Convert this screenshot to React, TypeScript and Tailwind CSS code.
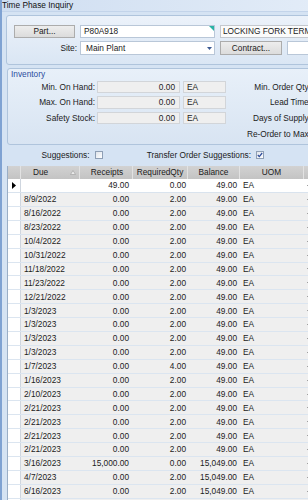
import React from "react";

type Row = [string, string, string, string];

const data: Row[] = [
  ["8/9/2022", "0.00", "2.00", "49.00"],
  ["8/16/2022", "0.00", "2.00", "49.00"],
  ["8/23/2022", "0.00", "2.00", "49.00"],
  ["10/4/2022", "0.00", "2.00", "49.00"],
  ["10/31/2022", "0.00", "2.00", "49.00"],
  ["11/18/2022", "0.00", "2.00", "49.00"],
  ["11/23/2022", "0.00", "2.00", "49.00"],
  ["12/21/2022", "0.00", "2.00", "49.00"],
  ["1/3/2023", "0.00", "2.00", "49.00"],
  ["1/3/2023", "0.00", "2.00", "49.00"],
  ["1/3/2023", "0.00", "2.00", "49.00"],
  ["1/3/2023", "0.00", "2.00", "49.00"],
  ["1/7/2023", "0.00", "4.00", "49.00"],
  ["1/16/2023", "0.00", "2.00", "49.00"],
  ["2/10/2023", "0.00", "2.00", "49.00"],
  ["2/21/2023", "0.00", "2.00", "49.00"],
  ["2/21/2023", "0.00", "2.00", "49.00"],
  ["2/21/2023", "0.00", "2.00", "49.00"],
  ["2/21/2023", "0.00", "2.00", "49.00"],
  ["3/16/2023", "15,000.00", "0.00", "15,049.00"],
  ["4/7/2023", "0.00", "2.00", "15,049.00"],
  ["6/16/2023", "0.00", "2.00", "15,049.00"],
];

const cols = "grid grid-cols-[13px_59px_53px_55px_52px_64px_40px]";

function Checkbox({ checked }: { checked?: boolean }) {
  return (
    <div className="w-[8px] h-[8px] border border-[#8e9fb5] bg-gradient-to-br from-[#dfe4ea] to-[#ffffff] flex items-center justify-center">
      {checked && (
        <svg width="6" height="6" viewBox="0 0 6 6">
          <path d="M0.8 3 L2.3 4.6 L5.2 1" fill="none" stroke="#2a4a9a" strokeWidth="1.2" />
        </svg>
      )}
    </div>
  );
}

function InvRow({ label, right, showInputs }: { label: string; right: string; showInputs: boolean }) {
  return (
    <div className="flex items-center h-[15.7px]">
      <div className="w-[87px] text-right">{label}</div>
      {showInputs ? (
        <>
          <div className="ml-[2px] w-[83px] h-[12.5px] bg-[#efefef] border border-[#d2d5d9] flex items-center justify-end pr-[4px]">0.00</div>
          <div className="ml-[3px] w-[43px] h-[12.5px] bg-[#efefef] border border-[#d2d5d9] flex items-center pl-[3px]">EA</div>
        </>
      ) : (
        <div className="ml-[5px] w-[126px]" />
      )}
      <div className="w-[85px] text-right whitespace-nowrap">{right}</div>
    </div>
  );
}

export default function App() {
  return (
    <div className="w-[308px] h-[500px] overflow-hidden bg-[#d5e3f3] border-l-2 border-[#7fa2d2] text-[8.3px] leading-none text-[#1b1b1b] font-['Liberation_Sans',Arial,sans-serif]">
      <div className="w-[340px] flex flex-col">
        {/* title bar */}
        <div className="h-[12px] flex items-center bg-gradient-to-r from-[#cfdef1] to-[#e4edf8] border-b border-[#c3d4ea]">
          <span className="text-[#111]">Time Phase Inquiry</span>
        </div>

        {/* top panel */}
        <div className="mt-[3px] ml-[4px] h-[50px] rounded-[3px] border border-[#afc4dc] bg-gradient-to-b from-[#ecf2fa] to-[#dae6f4] pt-[9px] pl-[7px]">
          <div className="grid grid-cols-[61px_135px_62px_80px] gap-x-[5px] gap-y-[3px]">
            <div className="h-[13px] bg-gradient-to-b from-[#ededed] to-[#dcdcdc] border border-[#acacac] flex items-center justify-center">Part...</div>
            <div className="relative h-[13px] bg-white border border-[#b9c7d8] flex items-center pl-[3px]">
              P80A918
              <div className="absolute top-0 right-0 w-0 h-0 border-l-[5px] border-l-transparent border-t-[5px] border-t-[#2bb3a5]" />
            </div>
            <div className="col-span-2 h-[13px] bg-[#fbfbfb] border border-[#c4c8ce] flex items-center pl-[2px] whitespace-nowrap overflow-hidden">LOCKING FORK TERMINAL</div>

            <div className="h-[14px] flex items-center justify-end -mr-[2px]">Site:</div>
            <div className="relative h-[14px] bg-white border border-[#b9c7d8] flex items-center pl-[5px]">
              Main Plant
              <svg className="absolute right-[2px] top-[5px]" width="5" height="3" viewBox="0 0 5 3">
                <path d="M0 0 H5 L2.5 3 Z" fill="#3c5a92" />
              </svg>
            </div>
            <div className="h-[14px] bg-gradient-to-b from-[#ededed] to-[#dcdcdc] border border-[#acacac] flex items-center justify-center">Contract...</div>
            <div className="h-[14px] bg-white border border-[#b9c7d8]" />
          </div>
        </div>

        {/* inventory group */}
        <div className="mt-[3px] ml-[5px] h-[77px] rounded-[3px] border border-[#afc4dc] bg-gradient-to-b from-[#e8f0f9] to-[#d8e4f2]">
          <div className="h-[10px] flex items-center pl-[3px] pt-[1px] text-[#2a4d9e]">Inventory</div>
          <InvRow label="Min. On Hand:" right="Min. Order Qty:" showInputs />
          <InvRow label="Max. On Hand:" right="Lead Time:" showInputs />
          <InvRow label="Safety Stock:" right="Days of Supply:" showInputs />
          <InvRow label="" right="Re-Order to Max:" showInputs={false} />
        </div>

        {/* suggestions */}
        <div className="h-[20.5px] flex items-center">
          <div className="w-[87.5px] text-right">Suggestions:</div>
          <div className="ml-[5.5px]">
            <Checkbox />
          </div>
          <div className="w-[148px] text-right">Transfer Order Suggestions:</div>
          <div className="ml-[5px]">
            <Checkbox checked />
          </div>
        </div>

        {/* grid */}
        <div className="ml-[5px] border-l border-[#9aaec6] bg-white">
          <div className={`${cols} h-[13.3px] bg-gradient-to-b from-[#d2d2d2] to-[#c3c3c3] text-[#202020]`}>
            <div className="border-r border-[#e2e2e2]" />
            <div className="relative flex items-center pl-[12px] border-r border-[#e2e2e2]">
              Due
              <svg className="absolute right-[3px] top-[4px]" width="6" height="5" viewBox="0 0 6 5">
                <path d="M3 0.5 L5.5 4.5 H0.5 Z" fill="#ececec" stroke="#a5a5a5" strokeWidth="0.7" />
              </svg>
            </div>
            <div className="flex items-center justify-center border-r border-[#e2e2e2] pl-[2px]">Receipts</div>
            <div className="flex items-center justify-center border-r border-[#e2e2e2]">RequiredQty</div>
            <div className="flex items-center justify-center border-r border-[#e2e2e2]">Balance</div>
            <div className="flex items-center justify-center border-r border-[#e2e2e2]">UOM</div>
            <div />
          </div>

          <div className={`${cols} h-[14.3px] bg-white border-b border-[#d9e3ee]`}>
            <div className="flex items-center justify-center border-r border-[#cfd6df]">
              <svg width="4" height="7" viewBox="0 0 4 7">
                <path d="M0 0 L4 3.5 L0 7 Z" fill="#000" />
              </svg>
            </div>
            <div />
            <div className="flex items-center justify-end pr-[4px]">49.00</div>
            <div className="flex items-center justify-end pr-[2px]">0.00</div>
            <div className="flex items-center justify-end pr-[3px]">49.00</div>
            <div className="flex items-center pl-[3px]">EA</div>
            <div className="flex items-center pl-[3px]">
              <div className="w-[2px] h-[1px] bg-[#a0a0a0]" />
            </div>
          </div>

          {data.map((r, i) => (
            <div key={i} className={`${cols} h-[13.9px] bg-[#efefef] border-b border-[#dbe5f0]`}>
              <div className="bg-white border-r border-[#cfd6df]" />
              <div className="flex items-center pl-[3px]">{r[0]}</div>
              <div className="flex items-center justify-end pr-[4px]">{r[1]}</div>
              <div className="flex items-center justify-end pr-[2px]">{r[2]}</div>
              <div className="flex items-center justify-end pr-[3px]">{r[3]}</div>
              <div className="flex items-center pl-[3px]">EA</div>
              <div className="flex items-center pl-[3px]">
                <div className="w-[2px] h-[1px] bg-[#a0a0a0]" />
              </div>
            </div>
          ))}
          <div className={`${cols} h-[13.9px] bg-[#efefef]`}>
            <div className="bg-white border-r border-[#cfd6df]" />
          </div>
        </div>
      </div>
    </div>
  );
}
